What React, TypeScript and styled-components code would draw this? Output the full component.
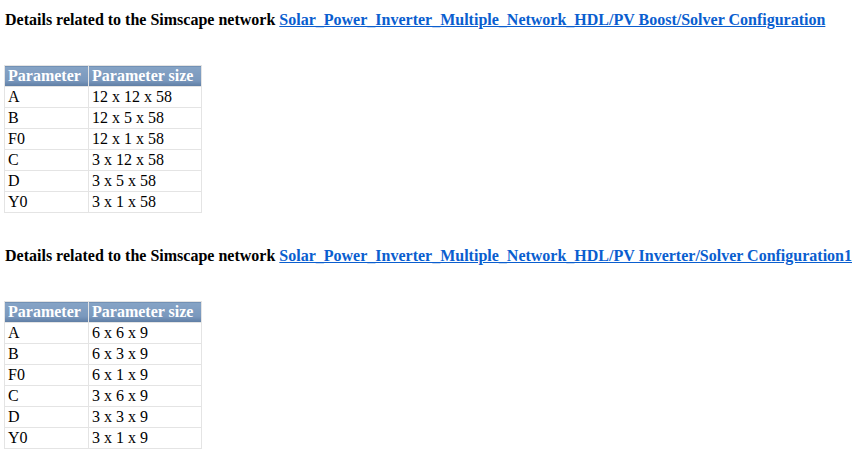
import styled, { createGlobalStyle } from 'styled-components';

const GlobalStyle = createGlobalStyle`
  body {
    margin: 0;
    background: #fff;
    font-family: "Liberation Serif", "Times New Roman", serif;
    font-size: 16px;
    color: #000;
  }
`;

const Page = styled.div`
  padding: 10px 4px;
  display: flex;
  flex-direction: column;
  gap: 33px;
`;

const Section = styled.section`
  display: flex;
  flex-direction: column;
  align-items: flex-start;
  gap: 35px;
`;

const Heading = styled.p`
  margin: 0 1px;
  font-weight: bold;
  line-height: 20px;
`;

const NetworkLink = styled.a`
  color: #0a5ecf;
  text-decoration: underline;
`;

const Table = styled.table`
  border-collapse: collapse;
  border: 1px solid #e4e4e4;
`;

const HeadCell = styled.th<{ $w: number }>`
  background: linear-gradient(to bottom, #86a4c6 0%, #7a98bd 70%, #5d7ca3 100%);
  color: #fff;
  font-weight: bold;
  text-align: left;
  padding: 0 3px;
  height: 20px;
  line-height: 20px;
  border: 1px solid #e4e4e4;
  white-space: nowrap;
  width: ${({ $w }) => $w}px;
`;

const Cell = styled.td`
  padding: 0 3px;
  height: 20px;
  line-height: 20px;
  border: 1px solid #e4e4e4;
`;

type Row = [string, string];

const sections: { path: string; rows: Row[] }[] = [
  {
    path: 'Solar_Power_Inverter_Multiple_Network_HDL/PV Boost/Solver Configuration',
    rows: [
      ['A', '12 x 12 x 58'],
      ['B', '12 x 5 x 58'],
      ['F0', '12 x 1 x 58'],
      ['C', '3 x 12 x 58'],
      ['D', '3 x 5 x 58'],
      ['Y0', '3 x 1 x 58'],
    ],
  },
  {
    path: 'Solar_Power_Inverter_Multiple_Network_HDL/PV Inverter/Solver Configuration1',
    rows: [
      ['A', '6 x 6 x 9'],
      ['B', '6 x 3 x 9'],
      ['F0', '6 x 1 x 9'],
      ['C', '3 x 6 x 9'],
      ['D', '3 x 3 x 9'],
      ['Y0', '3 x 1 x 9'],
    ],
  },
];

export default function App() {
  return (
    <>
      <GlobalStyle />
      <Page>
        {sections.map((s) => (
          <Section key={s.path}>
            <Heading>
              Details related to the Simscape network{' '}
              <NetworkLink href="#">{s.path}</NetworkLink>
            </Heading>
            <Table>
              <thead>
                <tr>
                  <HeadCell $w={77}>Parameter</HeadCell>
                  <HeadCell $w={106}>Parameter size</HeadCell>
                </tr>
              </thead>
              <tbody>
                {s.rows.map(([name, size]) => (
                  <tr key={name}>
                    <Cell>{name}</Cell>
                    <Cell>{size}</Cell>
                  </tr>
                ))}
              </tbody>
            </Table>
          </Section>
        ))}
      </Page>
    </>
  );
}
